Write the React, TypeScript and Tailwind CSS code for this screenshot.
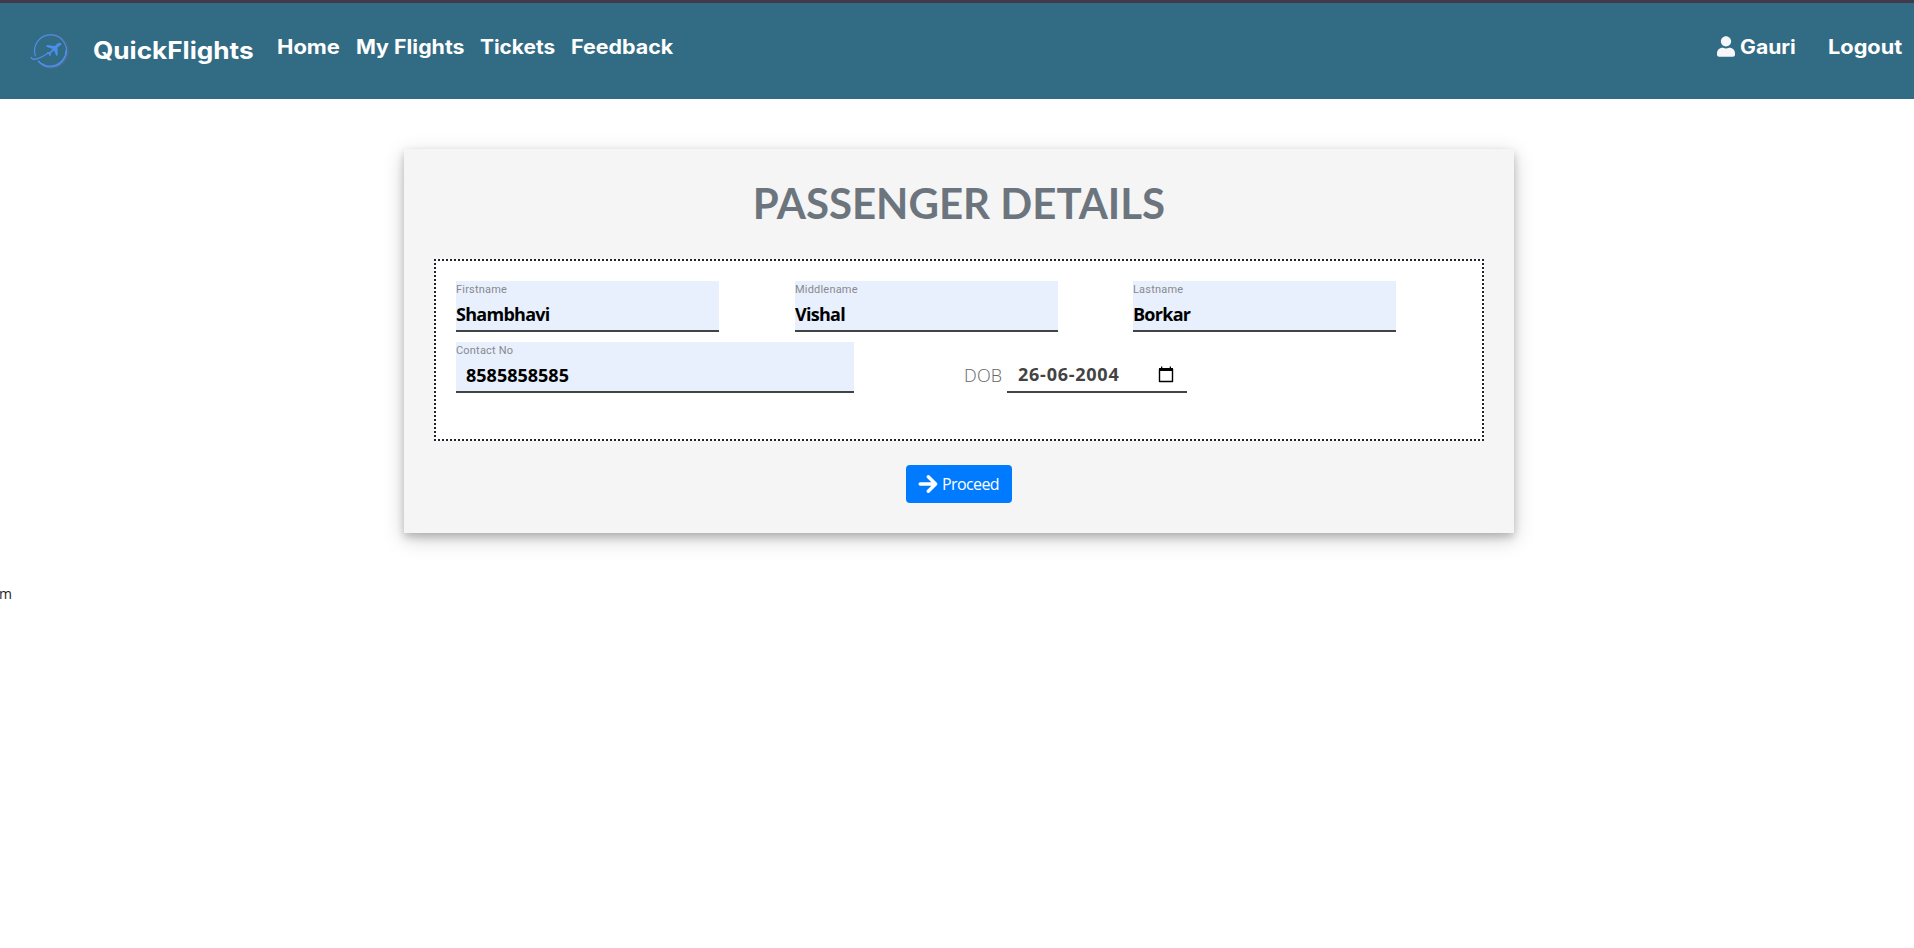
import React from "react";

const navLink = "block origin-left font-['Inter',sans-serif] text-[19.5px] leading-[30px] font-bold whitespace-nowrap text-white";

function Logo() {
  return (
    <svg className="h-10 w-10 shrink-0" viewBox="0 0 40 40" fill="none">
      <circle cx="21.400" cy="21.200" r="16.900" stroke="#6b6676" strokeWidth="1" opacity="0.8" />
      <path d="M5.400 26a16 16 0 1 1 2.800 5" stroke="#4a8eea" strokeWidth="1.200" />
      <path d="M8.200 31A16 16 0 0 0 36 20" stroke="#4a8eea" strokeWidth="1.200" />
      <path d="M1.300 27c.2 1.600 1 2.300 2.500 2.200 4.200 0 9-2.400 14.500-6.200" stroke="#4a8eea" strokeWidth="1.400" />
      <path
        d="M31.300 13.500c.4.500-.2 1.200-1.200 2l-2.600 2.200.3 7.400-1.600 1-2-5.500-3.200 2.500-.2 2.500-1.200.7-.8-2.400-2.400-.7 1.200-1.200 2-.1 3-3-7-2.400 1.700-1.400 7.500.8 2.600-2.300c1.300-1 3.200-1.100 3.900-.1Z"
        fill="#4a8eea"
      />
    </svg>
  );
}

function UserIcon() {
  return (
    <svg className="h-[21px] w-[18px]" viewBox="0 0 448 512" fill="#f5f7fa">
      <path d="M224 256c70.700 0 128-57.300 128-128S294.700 0 224 0 96 57.300 96 128s57.300 128 128 128zm89.600 32h-16.700c-22.200 10.200-46.900 16-72.900 16s-50.600-5.800-72.900-16h-16.700C60.200 288 0 348.200 0 422.400V464c0 26.500 21.500 48 48 48h352c26.500 0 48-21.500 48-48v-41.600c0-74.200-60.200-134.400-134.400-134.400z" />
    </svg>
  );
}

function Field({ label, value, wide = false }: { label: string; value: string; wide?: boolean }) {
  return (
    <div className={`${wide ? "w-[398px]" : "w-[263px]"} h-[51px] shrink-0 border-b-2 border-[#434343] bg-[#e8f0fe]`}>
      <div className="h-[16px] pt-px font-['Roboto',sans-serif] text-[11px] leading-[15px] tracking-[0.2px] text-[#88898d]">{label}</div>
      <div
        className={`${wide ? "pl-2.5 tracking-[0px]" : "tracking-[-0.72px]"} font-['Open_Sans',sans-serif] text-[18px] leading-[34px] font-bold text-black`}
      >
        {value}
      </div>
    </div>
  );
}

export default function App() {
  return (
    <div className="min-h-[948px] overflow-hidden bg-white">
      <header className="flex h-[99px] border-t-[3px] border-[#43394d] bg-[#326b84] pr-[11px] pl-[30px]">
        <div className="pt-[27px]">
          <Logo />
        </div>
        <div className="ml-[23px] w-[184px] pt-[30px]">
          <div className="w-fit origin-left scale-x-[1.09] font-['Inter',sans-serif] text-[24px] leading-[36px] font-bold text-white">QuickFlights</div>
        </div>
        <nav className="flex pt-[29px]">
          <div className="w-[79px]"><a className={`${navLink} scale-x-[1.125]`}>Home</a></div>
          <div className="w-[124px]"><a className={`${navLink} scale-x-[1.095]`}>My Flights</a></div>
          <div className="w-[91px]"><a className={`${navLink} scale-x-[1.07]`}>Tickets</a></div>
          <a className={`${navLink} scale-x-[1.1]`}>Feedback</a>
        </nav>
        <div className="ml-auto flex pt-[29px]">
          <div className="mr-[5px] pt-[4px]">
            <UserIcon />
          </div>
          <div className="w-[88px]"><a className={`${navLink} scale-x-[1.085]`}>Gauri</a></div>
          <div className="w-[75px]"><a className={`${navLink} scale-x-[1.115]`}>Logout</a></div>
        </div>
      </header>

      <main className="mt-[50px] ml-[404px] h-[384px] w-[1110px] bg-[#f5f5f5] px-[30px] shadow-[0_4px_8px_0_rgba(0,0,0,0.2),0_6px_20px_0_rgba(0,0,0,0.19)]">
        <h1 className="h-[110px] pt-[24px] text-center font-['Lato',sans-serif] text-[42px] leading-[60px] font-bold text-[#6c757d]">
          PASSENGER DETAILS
        </h1>
        <section className="h-[182px] border-2 border-dotted border-[#212529] bg-white px-5 pt-5">
          <div className="flex">
            <Field label="Firstname" value="Shambhavi" />
            <div className="w-[76px]" />
            <Field label="Middlename" value="Vishal" />
            <div className="w-[75px]" />
            <Field label="Lastname" value="Borkar" />
          </div>
          <div className="mt-2.5 flex">
            <Field label="Contact No" value="8585858585" wide />
            <div className="ml-[110px] w-[43px] pt-[16px] font-['Open_Sans',sans-serif] text-[18px] leading-[34px] font-light tracking-[0.2px] text-[#666]">
              DOB
            </div>
            <div className="flex h-[51px] w-[180px] justify-between border-b-2 border-[#434343] pt-[15px] pr-[13px] pl-[11px]">
              <span className="font-['Open_Sans',sans-serif] text-[18px] leading-[34px] font-bold tracking-[0.75px] whitespace-nowrap text-[#434343]">26-06-2004</span>
              <svg className="mt-[9px] h-[17px] w-[16px]" viewBox="0 0 16 17" fill="none">
                <path d="M1.500 3v12.500h13V3" stroke="#000" strokeWidth="1.400" strokeLinejoin="round" />
                <path d="M1 2h2V.5h1.300V2h7.400V.5H13V2h2v3H1Z" fill="#000" />
              </svg>
            </div>
          </div>
        </section>
        <div className="flex justify-center pt-6">
          <button className="flex h-[38px] w-[106px] items-center rounded bg-[#007bff] pl-[12px] text-white">
            <svg className="h-[20px] w-[20px] shrink-0" viewBox="0 0 20 20" fill="none" stroke="#fff" strokeWidth="3.400" strokeLinecap="round" strokeLinejoin="round">
              <path d="M2.200 10h15.200M10.300 2.700l7.300 7.300-7.300 7.300" />
            </svg>
            <span className="ml-[4px] font-['Open_Sans',sans-serif] text-[16px] leading-6 tracking-[-0.6px]">Proceed</span>
          </button>
        </div>
      </main>
      <div className="mt-[49px] -ml-px font-['Open_Sans',sans-serif] text-[14px] leading-6 text-[#212529]">m</div>
    </div>
  );
}
